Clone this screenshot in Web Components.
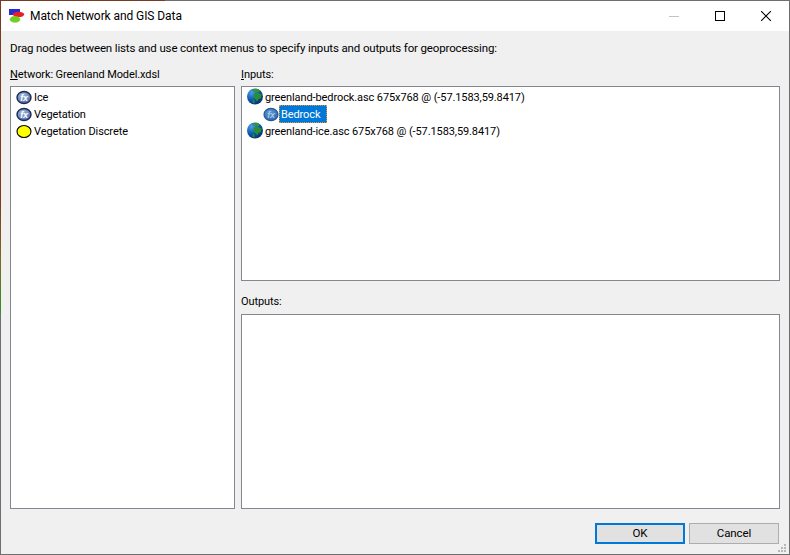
<!DOCTYPE html>
<html>
<head>
<meta charset="utf-8">
<title>Match Network and GIS Data</title>
<style>
  html, body { margin: 0; height: 100%; background: #f0f0f0; overflow: hidden; }
</style>
</head>
<body>

<gis-dialog caption="Match Network and GIS Data">
  <span slot="hint">Drag nodes between lists and use context menus to specify inputs and outputs for geoprocessing:</span>

  <list-box slot="network" mnemonic="N" label="etwork: Greenland Model.xdsl">
    <tree-node icon="fx">Ice</tree-node>
    <tree-node icon="fx">Vegetation</tree-node>
    <tree-node icon="discrete">Vegetation Discrete</tree-node>
  </list-box>

  <list-box slot="inputs" mnemonic="I" label="nputs:">
    <tree-node icon="globe">greenland-bedrock.asc 675x768 @ (-57.1583,59.8417)</tree-node>
    <tree-node icon="fxLight" level="1" selected>Bedrock</tree-node>
    <tree-node icon="globe">greenland-ice.asc 675x768 @ (-57.1583,59.8417)</tree-node>
  </list-box>

  <list-box slot="outputs" label="Outputs:"></list-box>

  <dialog-button slot="buttons" default>OK</dialog-button>
  <dialog-button slot="buttons">Cancel</dialog-button>
</gis-dialog>

<script>
const FONT = 'Roboto, "Liberation Sans", sans-serif'

const icons = {
  fx: `<svg width="16" height="16" viewBox="0 0 16 16">
    <defs><radialGradient id="b" cx="40%" cy="30%" r="75%"><stop offset="0" stop-color="#a3b7dd"/><stop offset="1" stop-color="#4a6ca8"/></radialGradient></defs>
    <ellipse cx="8" cy="8.5" rx="7" ry="6" fill="url(#b)" stroke="#1b2a4e" stroke-width="1.4"/>
    <text x="8" y="11.5" text-anchor="middle" font-family="Liberation Sans" font-style="italic" font-weight="bold" font-size="9" letter-spacing="-.3" fill="#fff">fx</text>
  </svg>`,
  fxLight: `<svg width="16" height="16" viewBox="0 0 16 16">
    <defs><radialGradient id="l" cx="40%" cy="30%" r="75%"><stop offset="0" stop-color="#5f97d6"/><stop offset="1" stop-color="#2b68ae"/></radialGradient></defs>
    <ellipse cx="8" cy="8.5" rx="7" ry="6.2" fill="url(#l)" stroke="#24568f" stroke-width="1.2"/>
    <text x="8" y="11.5" text-anchor="middle" font-family="Liberation Sans" font-style="italic" font-weight="bold" font-size="9" letter-spacing="-.3" fill="#a9c8ea">fx</text>
  </svg>`,
  discrete: `<svg width="16" height="16" viewBox="0 0 16 16">
    <ellipse cx="8" cy="8.5" rx="7" ry="6" fill="#ffff00" stroke="#000" stroke-width="1.1"/>
  </svg>`,
  globe: `<svg width="16" height="17" viewBox="0 0 16 17" style="margin-top:-1px">
    <defs><radialGradient id="g" cx="30%" cy="25%" r="85%"><stop offset="0" stop-color="#4f9de6"/><stop offset=".55" stop-color="#0d58ad"/><stop offset="1" stop-color="#062c66"/></radialGradient></defs>
    <circle cx="8" cy="8.5" r="8" fill="url(#g)"/>
    <path d="M5.5 1.2 10 .8 13 2.5 11.5 4.5 8.5 3.6 6.5 4Z" fill="#2f9a34"/>
    <path d="M7 5.5 11 5 14.6 6.6 14 10 11.5 11 10 13.5 8.5 11 6 9.5Z" fill="#2a8f30"/>
    <path d="M5.5 12 7.5 12.5 7.5 15.6 5.8 15Z" fill="#2a8f30"/>
  </svg>`
}

const dialogTemplate = document.createElement('template')
dialogTemplate.innerHTML = `
  <style>
  :host {
    display: block;
    position: relative;
    box-sizing: border-box;
    width: 790px;
    height: 555px;
    padding: 1px;
    /* the window behind bleeds through the thin frame on the top and left */
    background:
      linear-gradient(#7a3a22 0, #7a3a22 200px, #7d6a20 260px, #2f8f22 313px, #6f6f6f 313px) left top / 1px 100% no-repeat,
      linear-gradient(90deg, #7a3a22 0, #7a3a22 165px, #6f6f6f 165px) left top / 100% 1px no-repeat,
      #6f6f6f;
    font-family: ${FONT};
    font-size: 11px;
    letter-spacing: -0.1px;
    line-height: 15px;
    color: #000;
  }

  .window {
    display: flex;
    flex-direction: column;
    height: 100%;
    background: #f0f0f0;
  }

  .titlebar {
    display: flex;
    align-items: center;
    height: 30px;
    flex: none;
    background: #fff;
  }
  .logo { margin: 0 5px 0 8px; display: block; }
  .caption { flex: 1; font-size: 12px; letter-spacing: -0.08px; }
  .ctl { width: 46px; height: 30px; display: flex; align-items: center; justify-content: center; }

  .body {
    flex: 1;
    min-height: 0;
    display: flex;
    flex-direction: column;
    padding: 10px 9px 0 9px;
  }
  .hint { height: 15px; flex: none; font-size: 11.5px; letter-spacing: -0.14px; }
  .panes {
    flex: none;
    display: grid;
    grid-template-columns: 225px 539px;
    grid-template-rows: 213px 213px;
    column-gap: 6px;
    row-gap: 15px;
    margin-top: 12px;
  }
  .left { grid-row: 1 / 3; display: flex; }
  .inputs, .outputs { display: flex; }
  .footer {
    display: flex;
    justify-content: flex-end;
    gap: 4px;
    flex: none;
    margin-top: 14px;
    padding-right: 1px;
  }
  ::slotted(list-box) { flex: 1; }
  .grip { position: absolute; right: 4px; bottom: 3px; display: block; }
  </style>
  <div class="window">
    <div class="titlebar">
      <svg class="logo" width="16" height="16" viewBox="0 0 16 16">
        <rect x="0" y="1" width="11" height="6" fill="#2a2ad8"/>
        <ellipse cx="9.5" cy="6.5" rx="5.6" ry="2.7" fill="#e4202a"/>
        <ellipse cx="6" cy="11.3" rx="5" ry="3" fill="#66d420" stroke="#a8b020" stroke-width=".6"/>
      </svg>
      <span class="caption" id="caption"></span>
      <span class="ctl"><svg width="10" height="10"><path d="M0 5.5h10" stroke="#c4c4c4"/></svg></span>
      <span class="ctl"><svg width="10" height="10"><rect x=".5" y=".5" width="9" height="9" fill="none" stroke="#000"/></svg></span>
      <span class="ctl"><svg width="10" height="10"><path d="M0 0 10 10M10 0 0 10" stroke="#000" stroke-width="1.05"/></svg></span>
    </div>
    <div class="body">
      <div class="hint"><slot name="hint"></slot></div>
      <div class="panes">
        <div class="left"><slot name="network"></slot></div>
        <div class="inputs"><slot name="inputs"></slot></div>
        <div class="outputs"><slot name="outputs"></slot></div>
      </div>
      <div class="footer"><slot name="buttons"></slot></div>
    </div>
  </div>
  <svg class="grip" width="8" height="8" fill="#b8b8b8">
    <rect x="6" y="0" width="2" height="2"/>
    <rect x="3" y="3" width="2" height="2"/><rect x="6" y="3" width="2" height="2"/>
    <rect x="0" y="6" width="2" height="2"/><rect x="3" y="6" width="2" height="2"/><rect x="6" y="6" width="2" height="2"/>
  </svg>`

class GisDialog extends HTMLElement {
  constructor () {
    super()
    this.attachShadow({ mode: 'open' })
    this.shadowRoot.appendChild(dialogTemplate.content.cloneNode(true))
  }

  connectedCallback () {
    this.shadowRoot.querySelector('#caption').textContent = this.getAttribute('caption')
  }
}

const listTemplate = document.createElement('template')
listTemplate.innerHTML = `
  <style>
  :host { display: flex; flex-direction: column; min-width: 0; }
  .label { height: 15px; flex: none; margin: -1px 0 4px; }
  :host([slot="outputs"]) .label { margin: -2px 0 5px; }
  .box {
    flex: 1;
    box-sizing: border-box;
    background: #fff;
    border: 1px solid #828790;
    padding: 1px 0 0 5px;
    overflow: hidden;
  }
  </style>
  <div class="label"><u id="mn"></u><span id="rest"></span></div>
  <div class="box"><slot></slot></div>`

class ListBox extends HTMLElement {
  constructor () {
    super()
    this.attachShadow({ mode: 'open' })
    this.shadowRoot.appendChild(listTemplate.content.cloneNode(true))
  }

  connectedCallback () {
    this.shadowRoot.querySelector('#mn').textContent = this.getAttribute('mnemonic') || ''
    this.shadowRoot.querySelector('#rest').textContent = this.getAttribute('label')
  }
}

const nodeTemplate = document.createElement('template')
nodeTemplate.innerHTML = `
  <style>
  :host { display: flex; align-items: center; height: 17px; white-space: nowrap; }
  :host([level="1"]) { padding-left: 16px; }
  .icon { width: 16px; height: 16px; flex: none; }
  .icon svg { display: block; }
  .text { padding: 1px 2px 0; height: 17px; line-height: 17px; box-sizing: border-box; }
  :host([selected]) .text {
    height: 18px;
    width: 48px;
    background: #0078d7;
    color: #fff;
    outline: 1px dotted #e8963c;
    outline-offset: -1px;
  }
  </style>
  <span class="icon"></span><span class="text"><slot></slot></span>`

class TreeNode extends HTMLElement {
  constructor () {
    super()
    this.attachShadow({ mode: 'open' })
    this.shadowRoot.appendChild(nodeTemplate.content.cloneNode(true))
  }

  connectedCallback () {
    this.shadowRoot.querySelector('.icon').innerHTML = icons[this.getAttribute('icon')]
  }
}

const buttonTemplate = document.createElement('template')
buttonTemplate.innerHTML = `
  <style>
  :host {
    display: flex;
    box-sizing: border-box;
    width: 90px;
    height: 21px;
    align-items: center;
    justify-content: center;
    background: #e1e1e1;
    border: 1px solid #adadad;
    font-size: 11.5px;
  }
  :host([default]) { border: 2px solid #0078d7; }
  </style>
  <slot></slot>`

class DialogButton extends HTMLElement {
  constructor () {
    super()
    this.attachShadow({ mode: 'open' })
    this.shadowRoot.appendChild(buttonTemplate.content.cloneNode(true))
  }
}

customElements.define('gis-dialog', GisDialog)
customElements.define('list-box', ListBox)
customElements.define('tree-node', TreeNode)
customElements.define('dialog-button', DialogButton)
</script>
</body>
</html>
